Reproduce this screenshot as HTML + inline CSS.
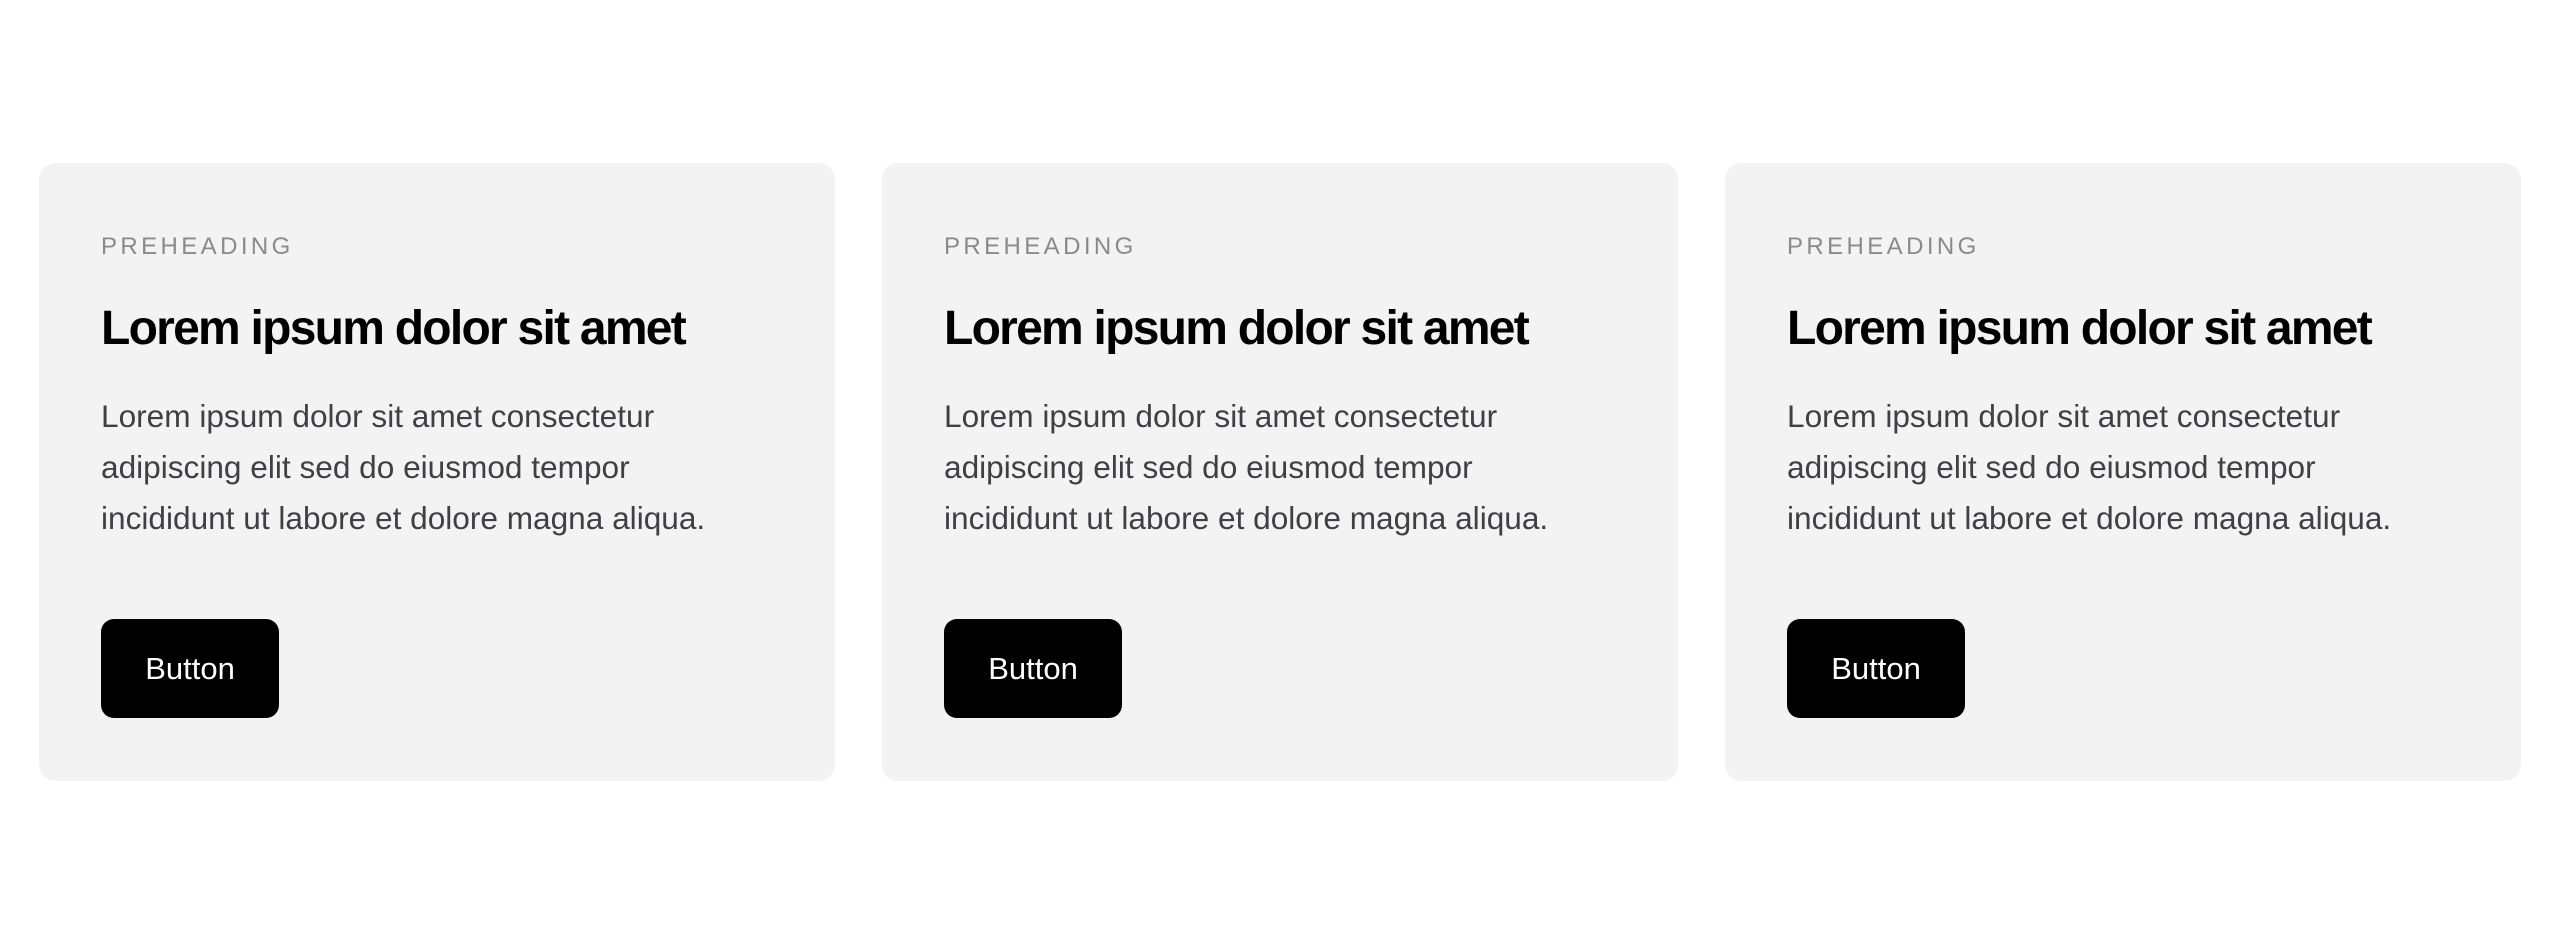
<!DOCTYPE html>
<html><head><style>
html,body{margin:0;padding:0;background:#fff;width:2560px;height:948px;overflow:hidden;font-family:"Liberation Sans",sans-serif}
.card{position:absolute;top:163px;width:796px;height:618px;background:#f3f3f3;border-radius:16px}
.pre{position:absolute;left:62px;top:230px;font-size:24px;line-height:34px;letter-spacing:3.4px;color:#8a8a8a}
.t{position:absolute;left:62px;top:299px;font-size:48px;line-height:60px;font-weight:bold;letter-spacing:-1.75px;color:#000;white-space:nowrap}
.b{position:absolute;left:62px;top:391px;font-size:31.6px;line-height:51px;color:#3f3f46;white-space:nowrap}
.btn{position:absolute;left:62px;top:619px;width:178px;height:99px;background:#000;border-radius:13px;color:#fff;font-size:31px;line-height:99px;text-align:center}
.col{position:absolute;top:0}
</style></head><body>
<div class="card" style="left:39px"></div>
<div class="card" style="left:882px"></div>
<div class="card" style="left:1725px"></div>

<div class="col" style="left:39px">
<div class="pre">PREHEADING</div>
<div class="t">Lorem ipsum dolor sit amet</div>
<div class="b">Lorem ipsum dolor sit amet consectetur<br>adipiscing elit sed do eiusmod tempor<br>incididunt ut labore et dolore magna aliqua.</div>
<div class="btn">Button</div>
</div>
<div class="col" style="left:882px">
<div class="pre">PREHEADING</div>
<div class="t">Lorem ipsum dolor sit amet</div>
<div class="b">Lorem ipsum dolor sit amet consectetur<br>adipiscing elit sed do eiusmod tempor<br>incididunt ut labore et dolore magna aliqua.</div>
<div class="btn">Button</div>
</div>
<div class="col" style="left:1725px">
<div class="pre">PREHEADING</div>
<div class="t">Lorem ipsum dolor sit amet</div>
<div class="b">Lorem ipsum dolor sit amet consectetur<br>adipiscing elit sed do eiusmod tempor<br>incididunt ut labore et dolore magna aliqua.</div>
<div class="btn">Button</div>
</div>
</body></html>
